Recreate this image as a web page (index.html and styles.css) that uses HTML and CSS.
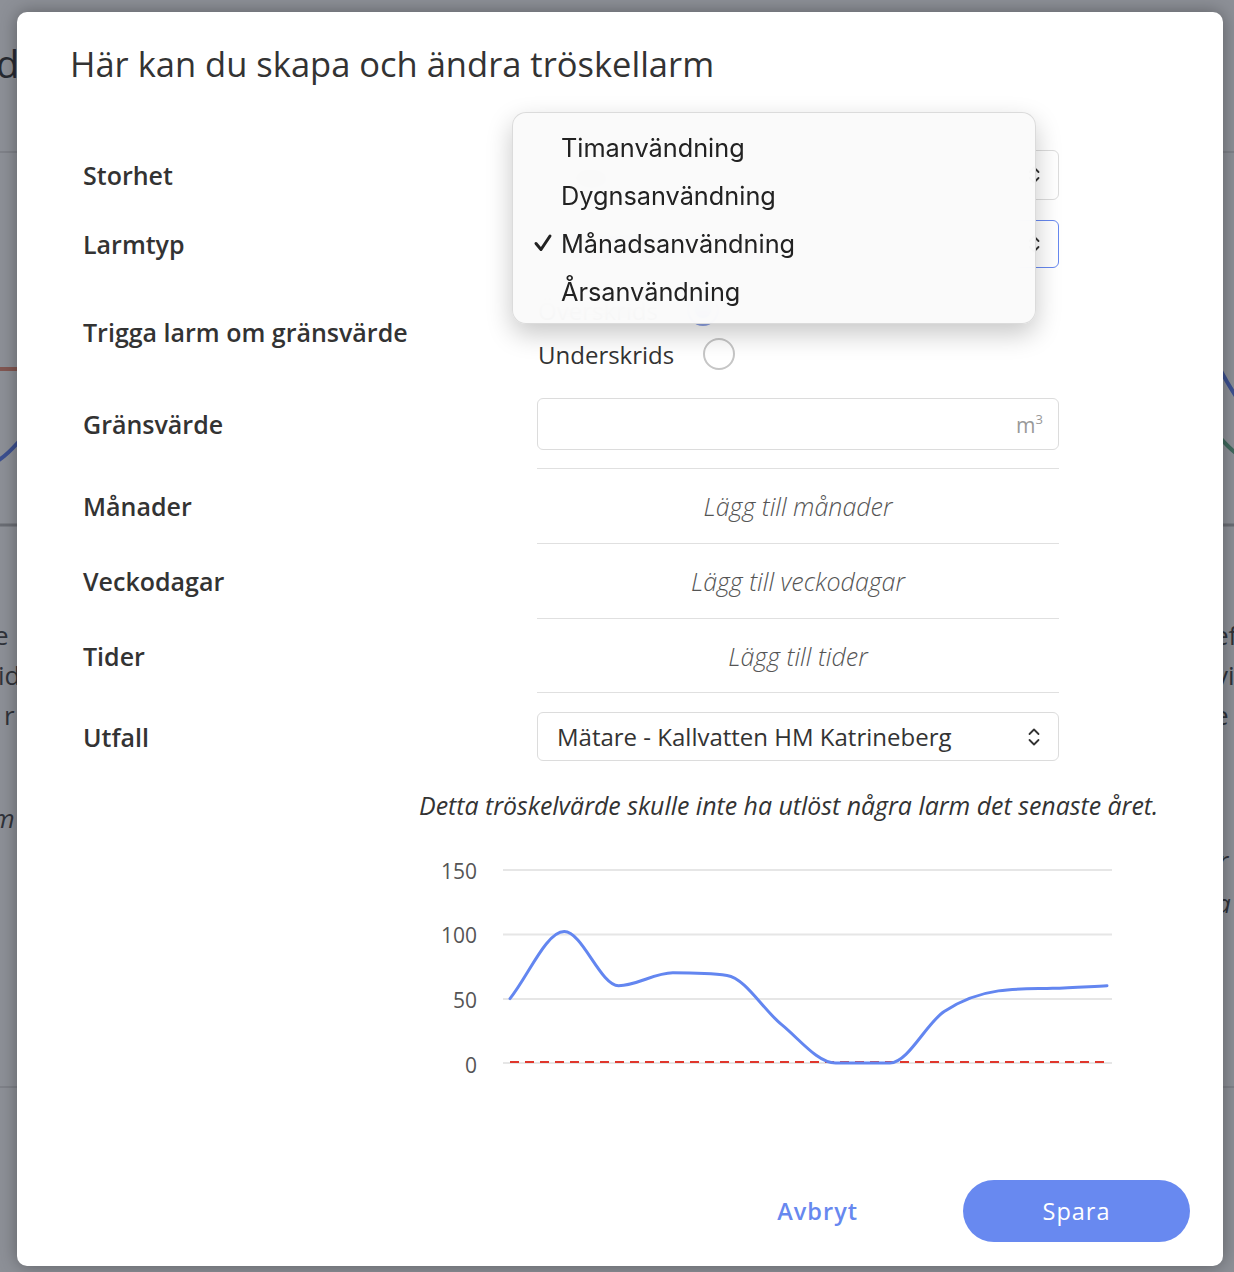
FILE: index.html
```html
<!DOCTYPE html>
<html lang="sv">
<head>
    <meta charset="UTF-8">
    <meta name="viewport" content="width=device-width, initial-scale=1.0">
    <title>Tröskellarm</title>
    <link rel="stylesheet" href="styles.css">
</head>
<body>
    <!-- dashboard behind the dialog -->
    <svg class="page" viewBox="0 0 1234 1272" aria-hidden="true">
        <text class="page-title" x="-4" y="78">d</text>
        <line x1="0" y1="152" x2="1234" y2="152" class="page-rule"/>
        <line x1="0" y1="369" x2="40" y2="369" class="page-limit"/>
        <path d="M-20 470 C0 462 10 452 22 438" class="page-line blue"/>
        <path d="M1215 360 C1222 372 1228 386 1240 402" class="page-line blue"/>
        <path d="M1215 432 C1224 442 1230 450 1240 456" class="page-line green"/>
        <line x1="0" y1="525" x2="1234" y2="525" class="page-axis"/>
        <text class="page-text" x="-6" y="645">e</text>
        <text class="page-text" x="-2" y="685">id</text>
        <text class="page-text" x="4" y="725">r</text>
        <text class="page-text italic" x="-8" y="828">m</text>
        <text class="page-text" x="1214" y="645">ef</text>
        <text class="page-text" x="1215" y="685">vi</text>
        <text class="page-text" x="1214" y="725">e</text>
        <text class="page-text italic" x="1218" y="870">r</text>
        <text class="page-text italic" x="1216" y="913">a</text>
        <line x1="0" y1="1087" x2="1234" y2="1087" class="page-rule"/>
    </svg>

    <div class="backdrop"></div>

    <div class="modal">
        <h2 class="modal-title">Här kan du skapa och ändra tröskellarm</h2>

        <div class="form">
            <div class="row">
                <span class="label">Storhet</span>
                <div class="select">
                    <span>Volym</span>
                    <svg class="chevrons" viewBox="0 0 12 22"><path d="M1.5 8 L6 3.5 L10.5 8 M1.5 14 L6 18.5 L10.5 14"/></svg>
                </div>
            </div>
            <div class="row row-type">
                <span class="label">Larmtyp</span>
                <div class="select focused">
                    <span>Månadsanvändning</span>
                    <svg class="chevrons" viewBox="0 0 12 22"><path d="M1.5 8 L6 3.5 L10.5 8 M1.5 14 L6 18.5 L10.5 14"/></svg>
                </div>
            </div>
            <div class="row row-radios">
                <span class="label">Trigga larm om gränsvärde</span>
                <div class="radios">
                    <label class="radio">Överskrids <span class="dot checked"></span></label>
                    <label class="radio">Underskrids <span class="dot"></span></label>
                </div>
            </div>
            <div class="row row-limit">
                <span class="label">Gränsvärde</span>
                <div class="input"><span class="unit">m<sup>3</sup></span></div>
            </div>
            <div class="row row-pick">
                <span class="label">Månader</span>
                <div class="pick">Lägg till månader</div>
            </div>
            <div class="row row-pick">
                <span class="label">Veckodagar</span>
                <div class="pick">Lägg till veckodagar</div>
            </div>
            <div class="row row-pick last">
                <span class="label">Tider</span>
                <div class="pick">Lägg till tider</div>
            </div>
            <div class="row row-outcome">
                <span class="label">Utfall</span>
                <div class="select">
                    <span>Mätare - Kallvatten HM Katrineberg</span>
                    <svg class="chevrons" viewBox="0 0 12 22"><path d="M1.5 8 L6 3.5 L10.5 8 M1.5 14 L6 18.5 L10.5 14"/></svg>
                </div>
            </div>
        </div>

        <div class="preview">
            <p class="summary">Detta tröskelvärde skulle inte ha utlöst några larm det senaste året.</p>
            <svg class="chart" width="690" height="225" viewBox="0 0 690 225">
                <g class="grid">
                    <line x1="73" y1="15" x2="682" y2="15"/>
                    <line x1="73" y1="79.5" x2="682" y2="79.5"/>
                    <line x1="73" y1="144" x2="682" y2="144"/>
                    <line x1="73" y1="208" x2="682" y2="208"/>
                </g>
                <g class="ticks">
                    <text x="47" y="24">150</text>
                    <text x="47" y="88">100</text>
                    <text x="47" y="153">50</text>
                    <text x="47" y="218">0</text>
                </g>
                <line class="threshold" x1="80" y1="207" x2="677" y2="207"/>
                <path class="usage" id="usageLine" d=""/>
            </svg>
        </div>

        <div class="actions">
            <button class="btn-link">Avbryt</button>
            <button class="btn-primary">Spara</button>
        </div>

        <!-- open native menu for Larmtyp -->
        <ul class="menu">
            <li>Timanvändning</li>
            <li>Dygnsanvändning</li>
            <li class="selected">
                <svg class="check" viewBox="0 0 20 20"><path d="M3 10.5 L8 16.5 L17 3"/></svg>
                Månadsanvändning
            </li>
            <li>Årsanvändning</li>
        </ul>
    </div>

    <script>
        const usage = [50, 102, 60, 70, 68, 30, 0, 0, 40, 56, 58, 60];

        const left = 80, right = 677, zeroY = 208, perUnit = 64.4 / 50;

        function toPoints(values) {
            const step = (right - left) / (values.length - 1);
            return values.map((v, i) => [left + i * step, zeroY - v * perUnit]);
        }

        // monotone cubic, same idea as chart.js "monotone"
        function monotonePath(pts) {
            const n = pts.length;
            const dx = [], m = [];
            for (let i = 0; i < n - 1; i++) {
                dx[i] = pts[i + 1][0] - pts[i][0];
                m[i] = (pts[i + 1][1] - pts[i][1]) / dx[i];
            }
            const t = [m[0]];
            for (let i = 1; i < n - 1; i++) {
                t[i] = m[i - 1] * m[i] <= 0 ? 0 : (m[i - 1] + m[i]) / 2;
            }
            t[n - 1] = m[n - 2];
            for (let i = 0; i < n - 1; i++) {
                if (m[i] === 0) { t[i] = 0; t[i + 1] = 0; continue; }
                const a = t[i] / m[i], b = t[i + 1] / m[i];
                const s = a * a + b * b;
                if (s > 9) {
                    const k = 3 / Math.sqrt(s);
                    t[i] = k * a * m[i];
                    t[i + 1] = k * b * m[i];
                }
            }
            let d = 'M' + pts[0][0] + ',' + pts[0][1];
            for (let i = 0; i < n - 1; i++) {
                const h = dx[i] / 3;
                d += ' C' + (pts[i][0] + h) + ',' + (pts[i][1] + t[i] * h) +
                     ' ' + (pts[i + 1][0] - h) + ',' + (pts[i + 1][1] - t[i + 1] * h) +
                     ' ' + pts[i + 1][0] + ',' + pts[i + 1][1];
            }
            return d;
        }

        document.getElementById('usageLine').setAttribute('d', monotonePath(toPoints(usage)));
    </script>
</body>
</html>
```

FILE: styles.css
```css
* {
    box-sizing: border-box;
}

body {
    margin: 0;
    width: 1234px;
    height: 1272px;
    overflow: hidden;
    position: relative;
    background: #ffffff;
    font-family: "Open Sans", "Noto Sans", sans-serif;
    color: #333;
}

/* page behind the dialog */
.page {
    display: block;
    width: 1234px;
    height: 1272px;
}

.page-title {
    font-size: 38px;
    fill: #333;
}

.page-text {
    font-size: 26px;
    fill: #444;
}

.page-text.italic {
    font-style: italic;
}

.page-rule {
    stroke: #e2e2e2;
    stroke-width: 2;
}

.page-axis {
    stroke: #b8b8b8;
    stroke-width: 3;
}

.page-limit {
    stroke: #e98c74;
    stroke-width: 4;
}

.page-line {
    fill: none;
    stroke-width: 4;
}

.page-line.blue {
    stroke: #5d7ff0;
}

.page-line.green {
    stroke: #62b08a;
}

.backdrop {
    position: absolute;
    inset: 0;
    background: rgba(28, 33, 48, 0.5);
}

/* dialog */
.modal {
    position: absolute;
    left: 17px;
    top: 12px;
    width: 1206px;
    height: 1254px;
    background: #fff;
    border-radius: 10px;
    box-shadow: 0 0 18px rgba(0, 0, 0, 0.35);
    display: flex;
    flex-direction: column;
    padding: 0 0 24px;
}

.modal-title {
    margin: 30px 0 0 53px;
    font-size: 34.5px;
    line-height: 44px;
    font-weight: 400;
    color: #333;
}

.form {
    margin: 64px 0 0 66px;
    display: flex;
    flex-direction: column;
    gap: 20px;
}

.row {
    display: grid;
    grid-template-columns: 454px 522px;
    align-items: center;
}

.label {
    font-size: 25px;
    font-weight: 600;
    color: #333;
}

.select {
    height: 50px;
    border: 1px solid #dcdcdc;
    border-radius: 6px;
    display: flex;
    align-items: center;
    justify-content: space-between;
    padding: 0 18px 0 19px;
    font-size: 24px;
    color: #333;
}

.select.focused {
    height: 48px;
    border-color: #6788ef;
}

.chevrons {
    width: 12px;
    height: 22px;
    fill: none;
    stroke: #333;
    stroke-width: 1.8;
    stroke-linecap: round;
    stroke-linejoin: round;
}

.radios {
    display: flex;
    flex-direction: column;
}

.radio {
    height: 44px;
    display: flex;
    align-items: center;
    gap: 29px;
    font-size: 24px;
    color: #333;
    padding-left: 1px;
}

.dot {
    width: 32px;
    height: 32px;
    border-radius: 50%;
    border: 2.5px solid #c6c6c6;
    background: #fff;
}

.dot.checked {
    border-color: #8fa3e6;
    box-shadow: inset 0 0 0 6px #fff, inset 0 0 0 16px #6788ef;
}

.input {
    height: 52px;
    border: 1px solid #dcdcdc;
    border-radius: 6px;
    display: flex;
    align-items: center;
    justify-content: flex-end;
    padding-right: 15px;
}

.unit {
    font-size: 21px;
    color: #999;
}

.unit sup {
    font-size: 13px;
    vertical-align: 9px;
}

.row-limit {
    margin-top: 2px;
}

.row-pick {
    height: 75px;
    margin-top: -20px;
}

.row-limit + .row-pick {
    margin-top: -2px;
}

.pick {
    height: 75px;
    border-top: 1px solid #e0e0e0;
    display: flex;
    align-items: center;
    justify-content: center;
    font-size: 25px;
    font-style: italic;
    font-weight: 300;
    color: #555;
}

.row-pick.last .pick {
    border-bottom: 1px solid #e0e0e0;
}

.row-outcome {
    margin-top: -1px;
}

.row-outcome .select {
    height: 49px;
}

.preview {
    margin: 27px 0 0 402px;
    width: 738px;
}

.summary {
    margin: 0;
    font-size: 24.9px;
    line-height: 34px;
    font-style: italic;
    color: #333;
    white-space: nowrap;
}

.chart {
    display: block;
    margin: 33px 0 0 11px;
}

.grid line {
    stroke: #e6e6e6;
    stroke-width: 2;
}

.ticks text {
    font-size: 21px;
    fill: #555;
    text-anchor: end;
}

.threshold {
    stroke: #e0372c;
    stroke-width: 1.8;
    stroke-dasharray: 9 6;
}

.usage {
    fill: none;
    stroke: #6386f0;
    stroke-width: 3;
    stroke-linecap: round;
    stroke-linejoin: round;
}

.actions {
    margin-top: auto;
    display: flex;
    justify-content: flex-end;
    align-items: center;
    gap: 65px;
    padding-right: 33px;
}

button {
    font-family: inherit;
    font-size: 23.5px;
    font-weight: 600;
    letter-spacing: 1px;
    border: none;
    cursor: pointer;
}

.btn-link {
    background: none;
    color: #6788ef;
    padding: 0 40px;
    height: 62px;
}

.btn-primary {
    width: 227px;
    height: 62px;
    border-radius: 31px;
    background: #6889f0;
    color: #fff;
    font-weight: 500;
}

/* native-looking dropdown */
.menu {
    position: absolute;
    left: 495px;
    top: 100px;
    width: 524px;
    height: 212px;
    margin: 0;
    padding: 10px 0 0;
    list-style: none;
    border-radius: 14px;
    border: 1px solid rgba(0, 0, 0, 0.12);
    background: rgba(250, 250, 250, 0.96);
    backdrop-filter: blur(16px);
    box-shadow: 0 10px 26px rgba(0, 0, 0, 0.22);
    font-family: Inter, "Liberation Sans", sans-serif;
}

.menu li {
    height: 48px;
    display: flex;
    align-items: center;
    padding-left: 48px;
    position: relative;
    font-size: 25.3px;
    color: #222;
}

.check {
    position: absolute;
    left: 20px;
    top: 14px;
    width: 20px;
    height: 20px;
    fill: none;
    stroke: #222;
    stroke-width: 3;
    stroke-linecap: round;
    stroke-linejoin: round;
}
```
